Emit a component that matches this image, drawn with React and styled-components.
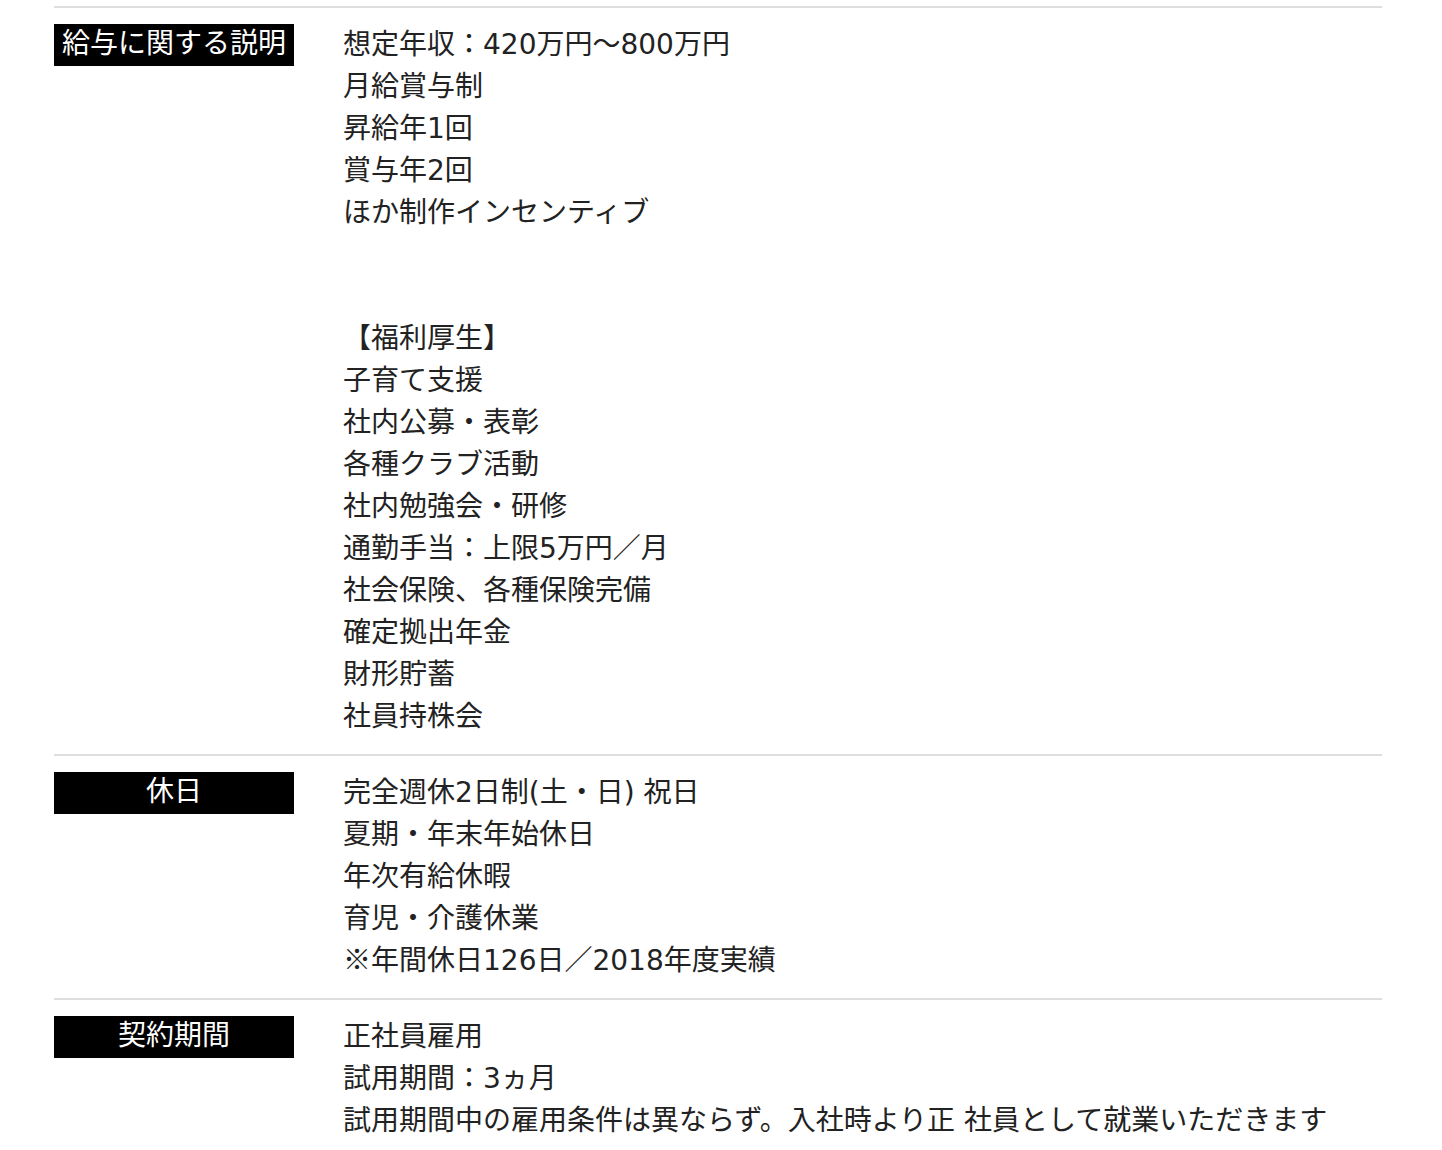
import React from 'react';
import styled, { createGlobalStyle } from 'styled-components';

const GlobalStyle = createGlobalStyle`
  html, body {
    margin: 0;
    padding: 0;
    background: #fff;
  }
  body {
    font-family: "DejaVu Sans", "Noto Sans CJK JP", sans-serif;
    color: #222;
  }
`;

const rows = [
    {
        label: '給与に関する説明',
        lines: [
            '想定年収：420万円〜800万円',
            '月給賞与制',
            '昇給年1回',
            '賞与年2回',
            'ほか制作インセンティブ',
            '',
            '',
            '【福利厚生】',
            '子育て支援',
            '社内公募・表彰',
            '各種クラブ活動',
            '社内勉強会・研修',
            '通勤手当：上限5万円／月',
            '社会保険、各種保険完備',
            '確定拠出年金',
            '財形貯蓄',
            '社員持株会'
        ]
    },
    {
        label: '休日',
        lines: [
            '完全週休2日制(土・日) 祝日',
            '夏期・年末年始休日',
            '年次有給休暇',
            '育児・介護休業',
            '※年間休日126日／2018年度実績'
        ]
    },
    {
        label: '契約期間',
        lines: [
            '正社員雇用',
            '試用期間：3ヵ月',
            '試用期間中の雇用条件は異ならず。入社時より正 社員として就業いただきます'
        ]
    }
];

// ※ comes out too narrow in DejaVu, so keep it in the CJK font
const renderLine = (line) => {
    if (!line) return '\u00a0';
    if (line.startsWith('※')) {
        return <><Cjk>※</Cjk>{line.slice(1)}</>;
    }
    return line;
}

const App = () => {
    return (
        <>
            <GlobalStyle />
            <Table>
                {rows.map((row) => (
                    <Row key={row.label}>
                        <Label>{row.label}</Label>
                        <Value>
                            {row.lines.map((line, i) => (
                                <Line key={i}>{renderLine(line)}</Line>
                            ))}
                        </Value>
                    </Row>
                ))}
            </Table>
        </>
    );
}

const Table = styled.dl`
  width: 1328px;
  margin: 6px 0 0 54px;
  padding: 0;
`;

const Row = styled.div`
  display: grid;
  grid-template-columns: 240px 1fr;
  column-gap: 49px;
  align-items: start;
  border-top: 2px solid #dedede;
  padding: 16px 0;
`;

const Label = styled.dt`
  margin: 0;
  height: 42px;
  background: #000;
  color: #fff;
  font-size: 28px;
  line-height: 40px;
  text-align: center;
  white-space: nowrap;
`;

const Value = styled.dd`
  margin: 0;
  font-size: 28px;
  line-height: 42px;
  color: #222;
`;

const Line = styled.div`
  height: 42px;
  white-space: nowrap;
`;

const Cjk = styled.span`
  font-family: "Noto Sans CJK JP", sans-serif;
  line-height: 1;
`;

export default App;
